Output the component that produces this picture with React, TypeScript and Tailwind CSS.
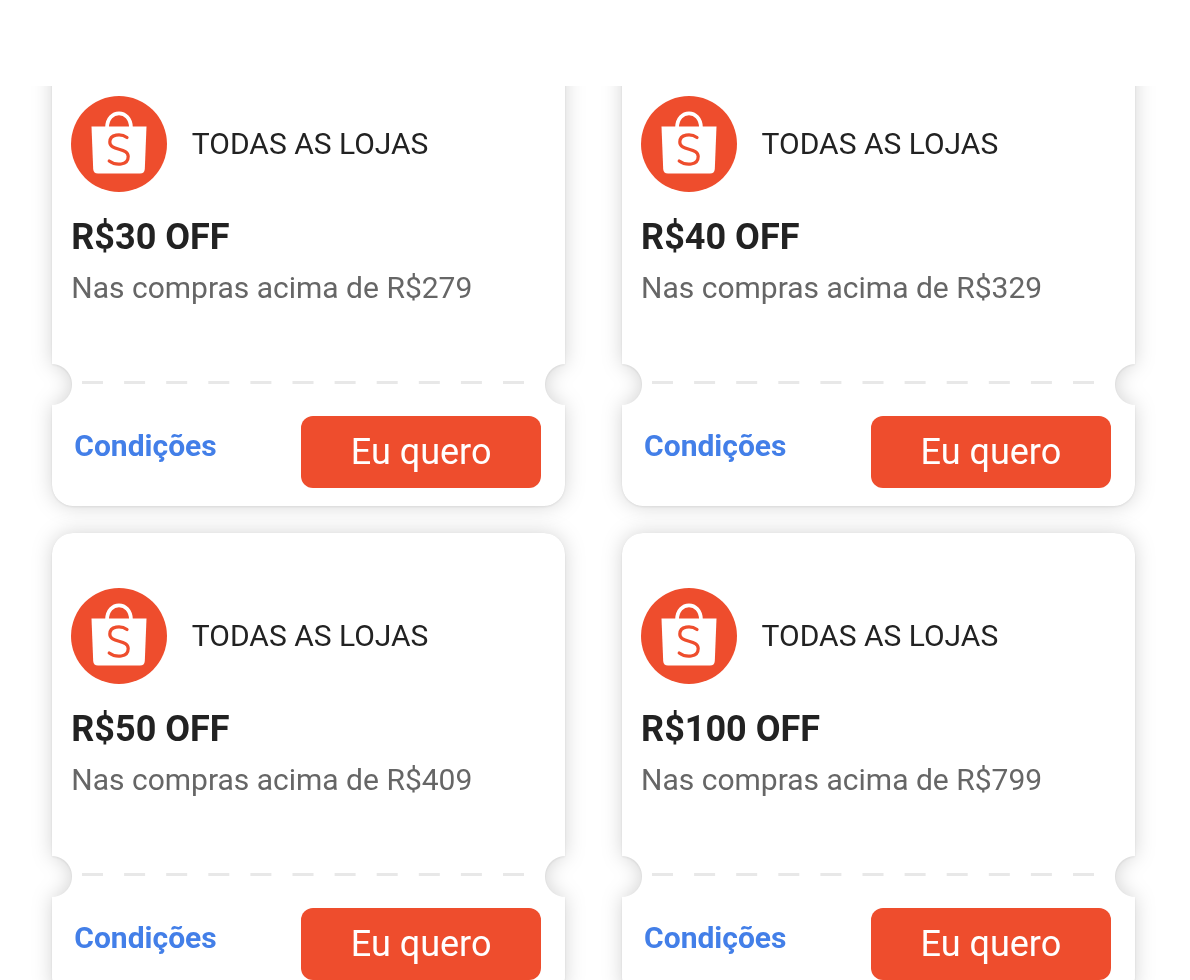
interface Coupon {
  value: string;
  minimum: string;
}

const coupons: Coupon[] = [
  { value: 'R$30 OFF', minimum: 'R$279' },
  { value: 'R$40 OFF', minimum: 'R$329' },
  { value: 'R$50 OFF', minimum: 'R$409' },
  { value: 'R$100 OFF', minimum: 'R$799' },
];

function StoreLogo() {
  return (
    <svg viewBox="0 0 96 96" className="h-24 w-24 shrink-0">
      <circle cx="48" cy="48" r="48" fill="#ee4d2d" />
      <path d="M36 32C36 12.5 60 12.5 60 32" fill="none" stroke="#fff" strokeWidth="3.8" />
      <path d="M20.5 30.5H75.5L73.8 73Q73.5 77.5 69 77.5H27Q22.5 77.5 22.2 73Z" fill="#fff" />
      <path
        d="M56 41.5C50 37 38.8 38 38.8 46C38.8 55.5 57.2 51 57.2 60.5C57.2 69.5 45 70 38.2 65"
        fill="none"
        stroke="#ee4d2d"
        strokeWidth="3.2"
        strokeLinecap="round"
      />
    </svg>
  );
}

function CouponCard({ value, minimum }: Coupon) {
  return (
    <article className="drop-shadow-[0_0_10px_rgba(0,0,0,0.17)]">
      <div className="drop-shadow-[0_1px_1px_rgba(0,0,0,0.08)]">
        {/* the mask bites a round notch out of both sides of the ticket */}
        <div className="flex h-[465.5px] flex-col rounded-[21px] bg-white pt-[55px] pr-6 pl-[19.5px] mask-intersect [mask-image:radial-gradient(circle_at_-0.5px_343.5px,transparent_20px,black_21px),radial-gradient(circle_at_513.5px_343.5px,transparent_20px,black_21px)]">
          <div className="flex items-center gap-[24.5px]">
            <StoreLogo />
            <span className="text-[30px] leading-9 text-[#222]">TODAS AS LOJAS</span>
          </div>
          <h2 className="mt-[23px] text-[36px] leading-11 font-bold text-[#222]">{value}</h2>
          <p className="mt-[11px] text-[30px] leading-9 text-[#666]">Nas compras acima de {minimum}</p>
          <svg viewBox="0 0 444 3" className="mt-[75px] ml-[11px] h-[3px] w-[444px] shrink-0">
            <path d="M0 1.5H444" stroke="#e8e8e8" strokeWidth="3" strokeDasharray="21 21.1" />
          </svg>
          <div className="mt-[32px] flex items-start justify-between pl-[3px]">
            <a className="mt-3 text-[30px] leading-9 font-bold text-[#437fe8]">Condições</a>
            <button className="h-18 w-60 rounded-xl bg-[#ee4d2d] text-[36px] text-white">Eu quero</button>
          </div>
        </div>
      </div>
    </article>
  );
}

export default function App() {
  return (
    <main className="h-[980px] w-[1190px] overflow-hidden bg-white pt-[86px] font-['Roboto',sans-serif]">
      <section className="h-[894px] overflow-hidden px-[51.8px]">
        <div className="-mt-[45.5px] grid grid-cols-[513.3px_513.3px] gap-x-[56.5px] gap-y-[27px]">
          {coupons.map((coupon) => (
            <CouponCard key={coupon.value} {...coupon} />
          ))}
        </div>
      </section>
    </main>
  );
}
